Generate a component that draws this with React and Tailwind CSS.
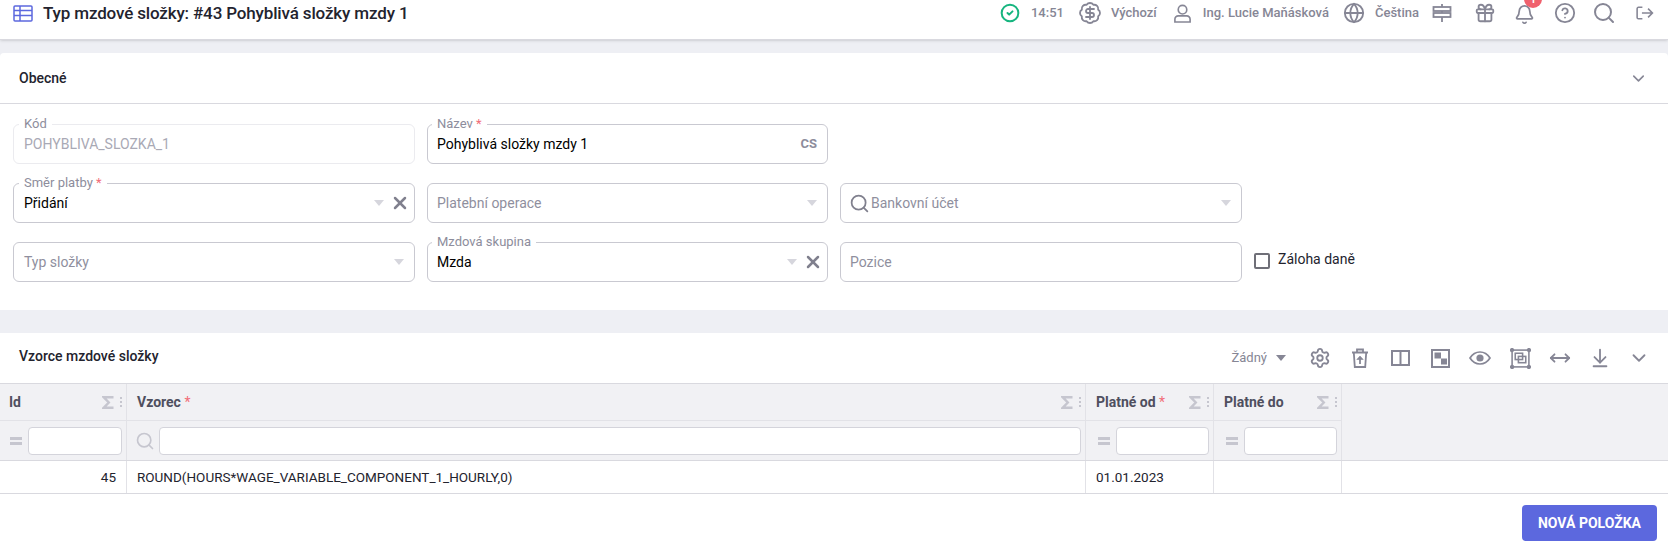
import {
  CircleCheck,
  BadgeDollarSign,
  Globe,
  Gift,
  Bell,
  CircleHelp,
  Search,
  ChevronDown,
  X,
  Settings,
  MoveHorizontal,
  ArrowDownToLine,
} from "lucide-react";

function TableIcon({ className }) {
  return (
    <svg viewBox="0 0 20 17" fill="none" stroke="currentColor" strokeWidth="1.5" className={className}>
      <rect x="1" y="1" width="18" height="15" rx="1" />
      <path d="M1 5.5h18M1 10.5h18M7 1v15" />
    </svg>
  );
}

function UserIcon({ className }) {
  return (
    <svg viewBox="0 0 20 20" fill="none" stroke="currentColor" strokeWidth="1.7" className={className}>
      <circle cx="10" cy="6" r="4.5" />
      <path d="M5.5 12.5h9a3.5 3.5 0 0 1 3.5 3.5v3H2v-3a3.5 3.5 0 0 1 3.5-3.5z" />
    </svg>
  );
}

function SignIcon({ className }) {
  return (
    <svg viewBox="0 0 20 20" fill="none" stroke="currentColor" strokeWidth="1.8" className={className}>
      <path d="M10 1v3M10 8v2M10 14v5" />
      <rect x="1.5" y="4" width="17" height="4" />
      <rect x="1.5" y="10" width="17" height="4" />
    </svg>
  );
}

function LogoutIcon({ className }) {
  return (
    <svg viewBox="0 0 20 16" fill="none" stroke="currentColor" strokeWidth="1.8" className={className}>
      <path d="M7 1.5H2.5A1.5 1.5 0 0 0 1 3v10a1.5 1.5 0 0 0 1.5 1.5H7" />
      <path d="M6.5 8h12M13.5 3l5 5-5 5" />
    </svg>
  );
}

function TrashUp({ className }) {
  return (
    <svg viewBox="0 0 18 20" fill="none" stroke="currentColor" strokeWidth="1.8" className={className}>
      <path d="M1 4.5h16M6 4.5V1.5h6v3M2.8 4.5l1 14.5h10.4l1-14.5" />
      <path d="M9 16v-6" />
      <path d="M5.8 11.5 9 8l3.2 3.5z" fill="currentColor" strokeWidth="0.6" />
    </svg>
  );
}

function ColumnsIcon({ className }) {
  return (
    <svg viewBox="0 0 19 16" fill="none" stroke="currentColor" strokeWidth="2" className={className}>
      <rect x="1" y="1" width="17" height="14" />
      <path d="M9.5 1v14" />
    </svg>
  );
}

function Checker({ className }) {
  return (
    <svg viewBox="0 0 19 19" className={className}>
      <rect x="1" y="1" width="17" height="17" fill="none" stroke="currentColor" strokeWidth="2" />
      <rect x="3.5" y="3.5" width="6.5" height="6" fill="currentColor" />
      <rect x="10" y="9.5" width="6" height="6" fill="currentColor" />
    </svg>
  );
}

function EyeIcon({ className }) {
  return (
    <svg viewBox="0 0 22 14" fill="none" stroke="currentColor" strokeWidth="1.7" className={className}>
      <path d="M1 7c2.4-3.8 5.8-6 10-6s7.600 2.200 10 6c-2.400 3.800-5.800 6-10 6S3.400 10.800 1 7z" />
      <circle cx="11" cy="7" r="3.600" fill="currentColor" stroke="none" />
    </svg>
  );
}

function FrameIcon({ className }) {
  return (
    <svg viewBox="0 0 20 20" fill="none" stroke="currentColor" strokeWidth="1.5" className={className}>
      <rect x="2" y="2" width="16" height="16" />
      <rect x="5" y="5" width="7" height="6" />
      <rect x="8" y="8" width="7" height="6" />
      <circle cx="2" cy="2" r="1.300" fill="currentColor" />
      <circle cx="18" cy="2" r="1.300" fill="currentColor" />
      <circle cx="2" cy="18" r="1.300" fill="currentColor" />
      <circle cx="18" cy="18" r="1.300" fill="currentColor" />
    </svg>
  );
}

function SigmaIcon() {
  return (
    <svg viewBox="0 0 12 13" fill="none" stroke="#c6c6cf" strokeWidth="2.400" className="w-[12px] h-[13px] mr-[6px]">
      <path d="M11.500 1.300H1.800L6.800 6.500 1.800 11.700h9.700" />
    </svg>
  );
}

function Caret() {
  return <span className="w-0 h-0 border-x-[5px] border-x-transparent border-t-[6px] border-t-[#d6d6dd]" />;
}

function Field({ label, required, value, placeholder, disabled, select, clear, search, suffix, tight }) {
  return (
    <div className={`relative h-[40px] rounded-md border flex items-center bg-white ${tight ? "pl-[9px]" : "pl-[10px]"} pr-[10px] ${disabled ? "border-[#ebebef]" : "border-[#c9c9d1]"}`}>
      {label && (
        <span className={`absolute -top-[10px] ${tight ? "left-[4px]" : "left-[5px]"} bg-white px-[5px] text-[13px] leading-[17px] text-[#8d8d9c]`}>
          {label}
          {required && <span className="text-[#f26d78]"> *</span>}
        </span>
      )}
      {search && <Search className="w-[21px] h-[21px] text-[#80808e] mr-[1px] -ml-[2px]" />}
      <span className={`flex-1 text-[14px] ${disabled ? "text-[#a9a9b5]" : value ? "text-black" : "text-[#8f8f9e]"}`}>
        {value || placeholder}
      </span>
      {select && <Caret />}
      {clear && <X className="w-[20px] h-[20px] ml-[6px] -mr-[6px] text-[#80808e]" strokeWidth={3} />}
      {suffix && <span className="text-[13px] font-bold text-[#8d8d9c]">{suffix}</span>}
    </div>
  );
}

const columns = [
  { name: "Id", width: "w-[127px]", cell: "45", right: true, pad: "pl-[10px]" },
  { name: "Vzorec", required: true, width: "w-[959px]", search: true, cell: "ROUND(HOURS*WAGE_VARIABLE_COMPONENT_1_HOURLY,0)", pad: "pl-[10px]" },
  { name: "Platné od", required: true, width: "w-[128px]", cell: "01.01.2023", pad: "pl-[12px]" },
  { name: "Platné do", width: "w-[128px]", cell: "", pad: "pl-[12px]" },
];

function HeaderCell({ col }) {
  return (
    <div className={`${col.width} shrink-0 border-r border-[#e2e2e7]`}>
      <div className="h-[37px] flex items-center pl-[9px] pr-[2px] border-b border-[#e2e2e7]">
        <span className={`flex-1 text-[14px] font-bold text-[#4f4f5f] ${col.name === "Id" ? "" : "pl-[1px]"}`}>
          {col.name}
          {col.required && <span className="text-[#f26d78] font-normal"> *</span>}
        </span>
        <SigmaIcon />
        <span className="flex flex-col gap-[2px] mr-[2px]">
          <span className="w-[2px] h-[2px] bg-[#c6c6cf]" />
          <span className="w-[2px] h-[2px] bg-[#c6c6cf]" />
          <span className="w-[2px] h-[2px] bg-[#c6c6cf]" />
        </span>
      </div>
      <div className={`h-[40px] flex items-center gap-[6px] ${col.pad} pr-[4px]`}>
        {col.search ? (
          <Search className="w-[20px] h-[20px] text-[#c6c6cf] -ml-[2px] -mr-[2px]" />
        ) : (
          <span className="w-[12px] flex flex-col gap-[2px]">
            <span className="h-[3px] bg-[#c6c6cf]" />
            <span className="h-[3px] bg-[#c6c6cf]" />
          </span>
        )}
        <div className="flex-1 h-[28px] rounded bg-white border border-[#d4d4db]" />
      </div>
    </div>
  );
}

export default function App() {
  return (
    <div className="h-[549px] overflow-hidden bg-[#eeeff4] font-['Roboto',sans-serif]">
      {/* top bar */}
      <div className="h-[40px] bg-white border-b border-[#d9d9df] shadow-sm flex items-center pl-[13px] pb-[13px] text-[#868695]">
        <TableIcon className="w-[20px] h-[17px] text-[#5c68de] mr-[10px]" />
        <h1 className="text-[17px] tracking-[-0.15px] font-medium text-[#23232e] flex-1 leading-none">
          Typ mzdové složky: #43 Pohyblivá složky mzdy 1
        </h1>
        <div className="flex items-center text-[13px] font-medium">
          <CircleCheck className="w-[20px] h-[20px] text-[#16b57f] mr-[11px]" strokeWidth={2.400} />
          <span>14:51</span>
          <BadgeDollarSign className="w-[24px] h-[24px] ml-[14px] mr-[9px]" strokeWidth={1.800} />
          <span>Výchozí</span>
          <UserIcon className="w-[19px] h-[19px] ml-[16px] mr-[11px]" />
          <span>Ing. Lucie Maňásková</span>
          <Globe className="w-[22px] h-[22px] ml-[14px] mr-[10px]" />
          <span>Čeština</span>
          <SignIcon className="w-[20px] h-[20px] ml-[13px]" />
          <Gift className="w-[22px] h-[22px] ml-[22px]" />
          <div className="relative ml-[18px]">
            <Bell className="w-[21px] h-[21px] mt-[3px]" />
            <span className="absolute -top-[11px] left-[10px] w-[18px] h-[18px] rounded-full bg-[#f0616d] text-white text-[10px] font-bold flex items-center justify-center">1</span>
          </div>
          <CircleHelp className="w-[22px] h-[22px] ml-[19px]" />
          <Search className="w-[24px] h-[24px] ml-[16px]" />
          <LogoutIcon className="w-[18px] h-[14px] ml-[20px] mr-[14px]" />
        </div>
      </div>

      {/* general section */}
      <section className="mt-[13px] h-[257px] bg-white rounded-t">
        <div className="h-[51px] border-b border-[#d9d9df] flex items-center justify-between pl-[19px] pr-[20px]">
          <h2 className="text-[14px] font-medium text-[#23232e]">Obecné</h2>
          <ChevronDown className="w-[19px] h-[19px] text-[#868695]" />
        </div>
        <div className="grid grid-cols-[402px_401px_402px_auto] gap-x-[12px] gap-y-[19px] pl-[13px] pt-[20px]">
          <Field label="Kód" value="POHYBLIVA_SLOZKA_1" disabled />
          <Field label="Název" required value="Pohyblivá složky mzdy 1" suffix="CS" tight />
          <div />
          <div />
          <Field label="Směr platby" required value="Přidání" select clear />
          <Field placeholder="Platební operace" select tight />
          <Field placeholder="Bankovní účet" search select />
          <div />
          <Field placeholder="Typ složky" select />
          <Field label="Mzdová skupina" value="Mzda" select clear tight />
          <Field placeholder="Pozice" tight />
          <label className="flex items-center gap-[8px] text-[14px] text-[#23232e] pb-[6px]">
            <span className="w-[16px] h-[16px] rounded-[2px] border-2 border-[#6f6f78] mt-[4px]" />
            Záloha daně
          </label>
        </div>
      </section>

      {/* formulas section */}
      <section className="mt-[23px] h-[216px] bg-white">
        <div className="h-[50px] flex items-center pl-[19px] pr-[18px] text-[#868695]">
          <h2 className="text-[14px] font-medium text-[#23232e] flex-1 pb-[4px]">Vzorce mzdové složky</h2>
          <span className="text-[13px] mr-[9px]">Žádný</span>
          <span className="w-0 h-0 border-x-[5px] border-x-transparent border-t-[6px] border-t-[#868695] mr-[14px]" />
          <div className="flex items-center">
            <div className="w-[40px] flex justify-center"><Settings className="w-[22px] h-[22px]" /></div>
            <div className="w-[40px] flex justify-center"><TrashUp className="w-[18px] h-[20px]" /></div>
            <div className="w-[40px] flex justify-center"><ColumnsIcon className="w-[19px] h-[16px]" /></div>
            <div className="w-[40px] flex justify-center"><Checker className="w-[19px] h-[19px]" /></div>
            <div className="w-[40px] flex justify-center"><EyeIcon className="w-[22px] h-[14px]" /></div>
            <div className="w-[40px] flex justify-center"><FrameIcon className="w-[21px] h-[21px]" /></div>
            <div className="w-[40px] flex justify-center"><MoveHorizontal className="w-[22px] h-[22px]" /></div>
            <div className="w-[40px] flex justify-center"><ArrowDownToLine className="w-[22px] h-[22px]" /></div>
            <div className="w-[30px] flex justify-end"><ChevronDown className="w-[22px] h-[22px]" /></div>
          </div>
        </div>
        <div className="flex h-[78px] bg-[#f1f1f4] border-y border-[#d9d9df]">
          {columns.map((col) => (
            <HeaderCell key={col.name} col={col} />
          ))}
        </div>
        <div className="flex h-[33px] border-b border-[#d9d9df]">
          {columns.map((col) => (
            <div
              key={col.name}
              className={`${col.width} shrink-0 border-r border-[#e2e2e7] flex items-center px-[10px] text-[13.5px] text-[#23232e] ${col.right ? "justify-end" : ""}`}
            >
              {col.cell}
            </div>
          ))}
        </div>
        <div className="flex justify-end pt-[11px] pr-[11px]">
          <button className="h-[36px] w-[135px] rounded bg-[#5c68de] text-white text-[14px] font-bold">NOVÁ POLOŽKA</button>
        </div>
      </section>
    </div>
  );
}
